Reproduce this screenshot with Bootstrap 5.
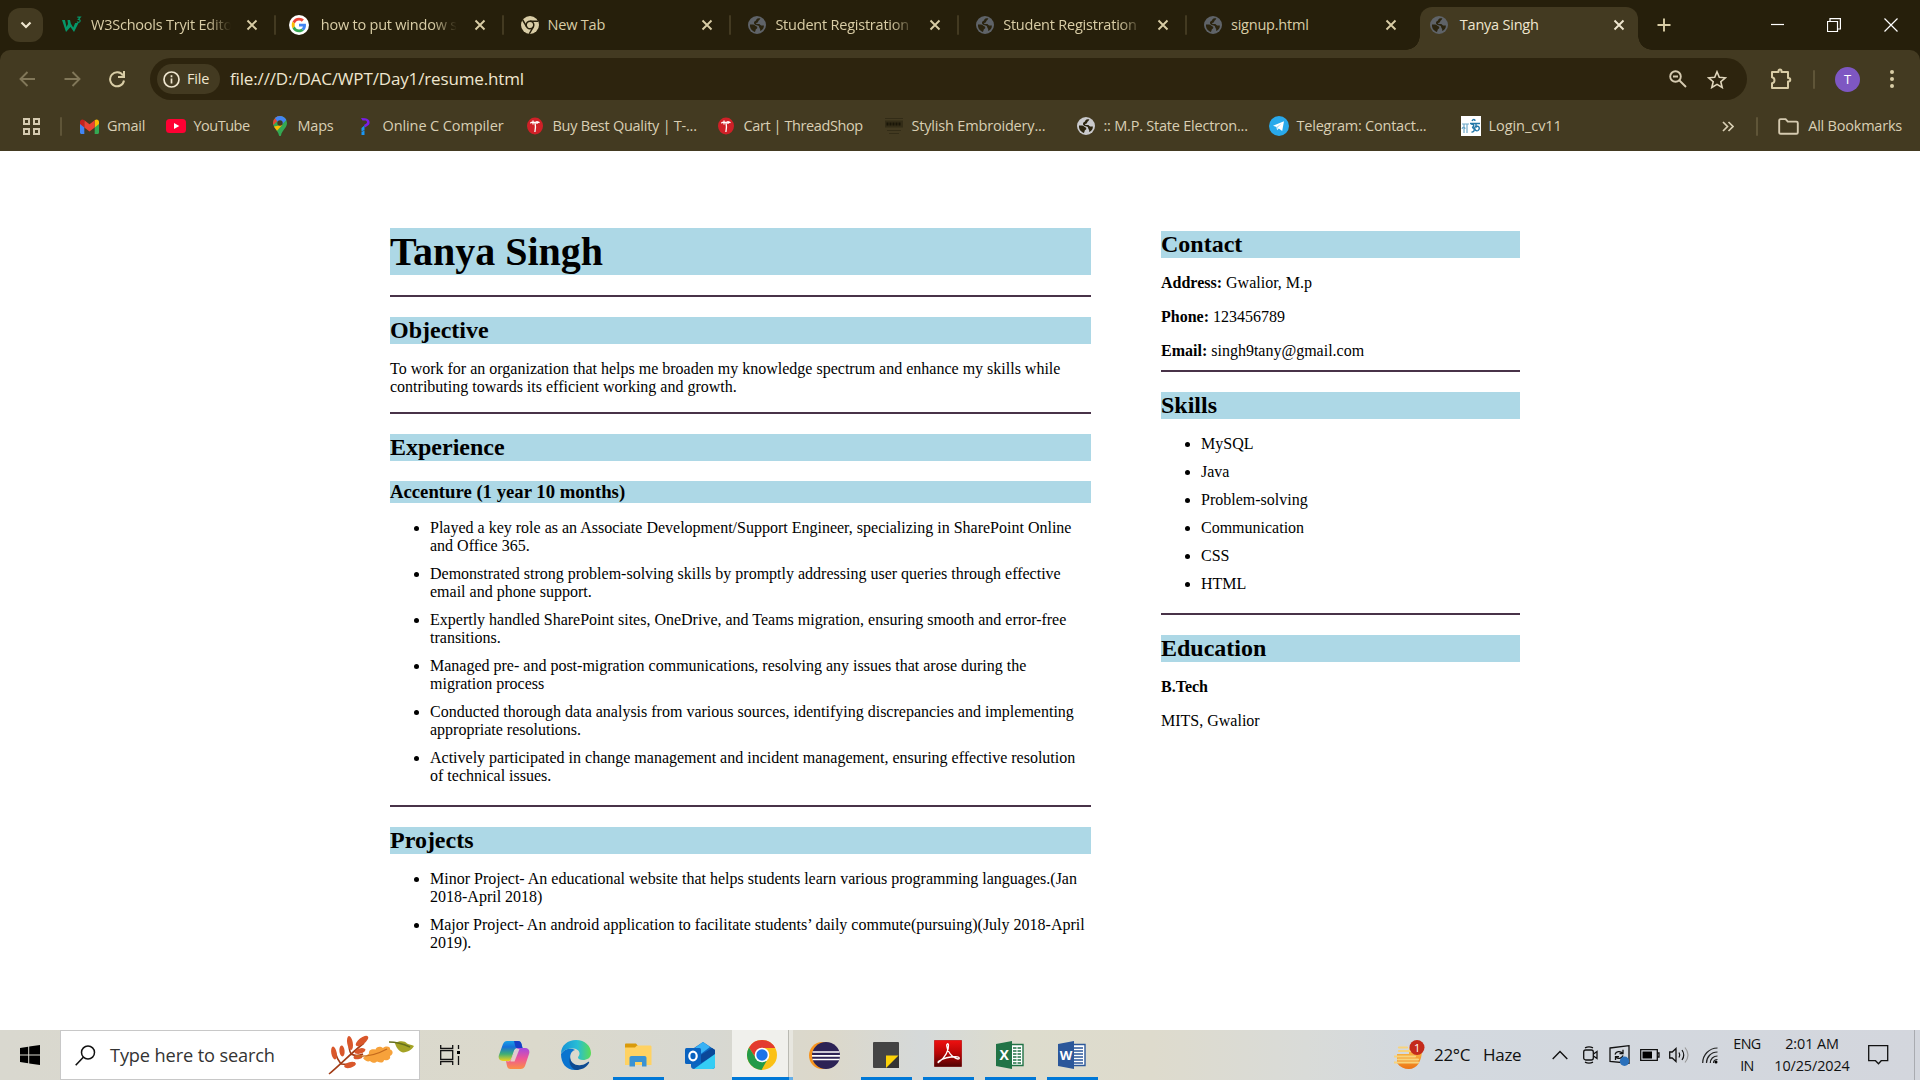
<!DOCTYPE html>
<html lang="en">
<head>
<meta charset="utf-8">
<title>Tanya Singh</title>
<link href="https://cdn.jsdelivr.net/npm/bootstrap@5.3.0/dist/css/bootstrap.min.css" rel="stylesheet">
<style>
  html, body { height: 1080px; overflow: hidden; }
  body { background: #fff; color: #000; font-family: "Open Sans", "Noto Sans", sans-serif; font-size: 14.5px; letter-spacing: -.22px; line-height: 20px; }
  svg { display: block; flex: none; }

  /* browser frame */
  .tab-strip { height: 50px; background: #261f0b; color: #d9cda6; padding: 7px 0 0 8px; }
  .tab-search { width: 35px; height: 34px; margin-top: 1px; border-radius: 12px; background: #433a21; flex: none; }
  .tab-list { margin-left: 5px; }
  .page-tab { width: 227.8px; height: 36px; padding: 0 18px 0 13px; position: relative; flex: none; }
  .page-tab.divided::after { content: ""; position: absolute; right: 0; top: 8px; width: 2px; height: 20px; background: #433a21; border-radius: 1px; }
  .tab-label { width: 140px; margin-left: 9px; overflow: hidden; white-space: nowrap; }
  .tab-label.faded { -webkit-mask-image: linear-gradient(90deg, #000 116px, transparent 140px); mask-image: linear-gradient(90deg, #000 116px, transparent 140px); }
  .tab-label + svg { margin-left: auto; }
  .current-tab { width: 218px; height: 43px; margin-left: 5px; background: #433a21; color: #efe6cf; border-radius: 12px 12px 0 0; padding: 0 13px 7px 10px; }
  .current-tab::before, .current-tab::after { content: ""; position: absolute; bottom: 0; width: 14px; height: 14px; }
  .current-tab::before { left: -14px; background: radial-gradient(circle at 0 0, transparent 13.5px, #433a21 14px); }
  .current-tab::after { right: -14px; background: radial-gradient(circle at 100% 0, transparent 13.5px, #433a21 14px); }
  .new-tab-key { margin: 11px 0 0 19px; }
  .window-keys { gap: 43px; padding: 0 22px 8px 0; }
  .toolbar-area { background: #261f0b; }
  .toolbar-row { height: 58px; background: #433a21; border-radius: 10px 10px 0 0; padding: 0 17px 0 18px; }
  .nav-keys { gap: 25px; width: 132px; }
  .nav-keys svg:last-child { margin-left: 1px; }
  .address { width: 1597px; height: 42px; border-radius: 21px; background: #2d240e; color: #efe6cf; padding: 0 20px 0 7px; }
  .file-chip { width: 63px; height: 30px; border-radius: 15px; background: #433a21; padding-left: 6px; gap: 7px; }
  .url-text { font-size: 17px; letter-spacing: -.15px; margin-left: 10px; }
  .address-keys { gap: 20px; }
  .avatar { width: 25px; height: 25px; background: #7e57c2; color: #fff; font-size: 13px; letter-spacing: 0; }
  .bookmark-row { height: 43px; background: #433a21; color: #d9cfb4; padding: 0 18px 7px 22px; }
  .thin-rule { width: 2px; height: 19px; background: #5f5538; border-radius: 1px; flex: none; }
  .bm { display: flex; align-items: center; gap: 7.5px; white-space: nowrap; flex: none; }
  .bm-gmail { width: 86.5px; } .bm-youtube { width: 104px; letter-spacing: -.5px; } .bm-maps { width: 85px; }
  .bm-compiler { width: 170px; letter-spacing: -.1px; } .bm-quality { width: 191px; letter-spacing: -.25px; } .bm-cart { width: 168px; letter-spacing: -.4px; }
  .bm-stylish { width: 192px; letter-spacing: -.18px; } .bm-state { width: 193px; } .bm-telegram { width: 192px; } .bm-login { width: 120px; letter-spacing: -.05px; }
  .bm-icon { width: 20px; display: flex; justify-content: center; flex: none; }

  /* resume */
  .resume { height: 879px; padding: 77px 400px 0 390px; font-family: "Liberation Serif", serif; font-size: 16px; line-height: 18px; letter-spacing: 0; }
  .resume h1, .resume h2, .resume h3 { background: lightblue; font-weight: 700; margin: 0; }
  .resume h1 { font-size: 40px; line-height: 47px; }
  .resume h2 { font-size: 24px; line-height: 27px; margin-top: 20px; }
  .resume h3 { font-size: 18.72px; line-height: 22px; margin: 20px 0 16px; }
  .resume p { margin: 16px 0; }
  .resume ul { padding-left: 40px; margin: 16px 0 0; }
  .resume li { margin-bottom: 10px; }
  .resume li:last-child { margin-bottom: 0; }
  .resume hr { margin: 0; border: 0; height: 2px; background: #483248; opacity: 1; }
  .resume ul + hr, .resume h1 + hr { margin-top: 20px; }
  .resume p.email-line { margin-bottom: 10px; }
  .main-col { width: 701px; flex: none; }
  .side-col { width: 359px; margin-left: 70px; padding-top: 3px; flex: none; }
  .side-col h2:first-child { margin-top: 0; }

  /* taskbar */
  .taskbar { height: 50px; background: linear-gradient(90deg, #d9d8cf 0, #dbd9cc 28%, #d7d8d2 37%, #dcd8ca 43%, #d5d9d9 48%, #dddccd 53%, #dedbcd 60%, #d9dbd8 68%, #d3d9df 74%, #d3d6dd 100%); color: #111; }
  .start-key { width: 60px; }
  .search-field { width: 360px; height: 50px; background: #fff; border: 1px solid #c8c8c8; padding: 0 2px 0 14px; font-size: 18.2px; color: #333; letter-spacing: -.13px; }
  .view-key { width: 63px; padding-right: 3px; }
  .task-key { width: 62px; height: 50px; display: flex; align-items: center; justify-content: center; position: relative; flex: none; }
  .task-key.is-open::after { content: ""; position: absolute; left: 6px; right: 5px; bottom: 0; height: 3px; background: #0078d7; }
  .task-key.is-active { background: linear-gradient(90deg, transparent 1px, #f0f0ec 1px 57px, #b9b9b2 57px 58px, #e7e6df 58px); }
  .task-key.is-active::after { left: 1px; right: 0; background: linear-gradient(90deg, #0078d7 57px, #64aee8 57px); }
  .weather-text { width: 118px; margin-left: 9px; font-size: 17px; letter-spacing: -.3px; }
  .weather-text span:first-child { width: 49px; }
  .lang-box { width: 40px; margin-left: 9px; line-height: 22.5px; letter-spacing: -.6px; font-size: 14.3px; }
  .clock-box { width: 90px; line-height: 22.5px; letter-spacing: -.1px; font-size: 14.4px; }
  .desktop-edge { width: 1px; height: 50px; margin: 0 5px 0 25px; background: #a9abb0; }
</style>
<script src="https://cdn.jsdelivr.net/npm/bootstrap@5.3.0/dist/js/bootstrap.bundle.min.js"></script>
</head>
<body>

<svg width="0" height="0" class="position-absolute">
  <defs>
    <symbol id="cross" viewBox="0 0 12 12"><path d="M1.500 1.500l9 9M10.500 1.500l-9 9" stroke="currentColor" stroke-width="1.900"/></symbol>
    <symbol id="globe" viewBox="0 0 18 18"><circle cx="9" cy="9" r="9" fill="currentColor"/><path d="M2 8.500h3c1.800 0 2 1.300 3.200 1.700 1.500.5 1.500 2.300 0 2.800-.9.300-.3 1.800-1.300 2.900C3.800 15 1.600 12 2 8.500zM8.500 3.200c.8-1 2.400-1.200 3.900-.6-.5.700-.7 1.500-1.600 1.900-.9.500-.3 1.700-1.300 2-1 .3-1.400.5-1.300 1.400l3 .2c.9.100.9 1.200 1.900 1.300h2.800c.1 2.700-1.500 4.900-3.900 5.600.4-1 .3-1.900-.4-2.700-.5-.9-.3-1.800-1.200-2.500-.8-.6-2.500-.6-3.600-1.300-1-.8-1.100-2.200-.3-3 .6-.7 1.900-.9 2-2.300z" fill="#2b240f"/></symbol>
    <symbol id="threadshop" viewBox="0 0 16 20"><ellipse cx="8" cy="10" rx="8" ry="8.500" fill="#cf2027"/><path d="M3.300 7.200C5.500 5.200 7 6.700 8 6.500c1.500-.3 2.500-1.300 4.500.2M8 6.500c.8 3 .5 6-.1 9.500M6 4.500v4M10 5v3" stroke="#fff" stroke-width="1.300" fill="none"/></symbol>
  </defs>
</svg>

<header>
  <div class="tab-strip d-flex">
    <div class="tab-search d-flex align-items-center justify-content-center">
      <svg width="12" height="8" viewBox="0 0 12 8"><path d="M1.500 1.500L6 6l4.500-4.500" fill="none" stroke="#efe6cf" stroke-width="2.200"/></svg>
    </div>
    <div class="tab-list d-flex">
      <div class="page-tab divided d-flex align-items-center">
        <svg width="21" height="18" viewBox="0 0 21 18"><path d="M1 4l4 12 4.500-5 3.500 5L17.500 7h-3.300l-2 4.500L9.800 7.500 9 4H6.500L7 8l-1.500 3L4 4z" fill="#059669"/><path d="M16.300 1.200h3L17.500 3.300c2 0 2.400 2.600.2 3-.9.100-1.300-.2-1.700-.7" fill="none" stroke="#059669" stroke-width="1.200"/></svg>
        <span class="tab-label faded">W3Schools Tryit Edito</span>
        <svg width="12" height="12"><use href="#cross"/></svg>
      </div>
      <div class="page-tab divided d-flex align-items-center">
        <svg width="20" height="20" viewBox="0 0 48 48"><circle cx="24" cy="24" r="24" fill="#fff"/><g transform="translate(6.500 6.500) scale(.73)"><path fill="#ea4335" d="M24 9.500c3.540 0 6.710 1.220 9.210 3.600l6.850-6.850C35.900 2.380 30.470 0 24 0 14.620 0 6.510 5.380 2.560 13.220l7.980 6.190C12.430 13.720 17.740 9.500 24 9.500z"/><path fill="#4285f4" d="M46.980 24.550c0-1.570-.15-3.090-.38-4.550H24v9.020h12.940c-.58 2.960-2.260 5.480-4.780 7.180l7.730 6c4.510-4.180 7.090-10.360 7.090-17.650z"/><path fill="#fbbc05" d="M10.530 28.590c-.48-1.450-.76-2.990-.76-4.590s.27-3.140.76-4.590l-7.980-6.190C.92 16.460 0 20.120 0 24s.92 7.540 2.560 10.780l7.970-6.190z"/><path fill="#34a853" d="M24 48c6.480 0 11.930-2.130 15.890-5.810l-7.730-6c-2.150 1.450-4.920 2.300-8.160 2.300-6.260 0-11.570-4.220-13.470-9.910l-7.980 6.190C6.510 42.620 14.620 48 24 48z"/></g></svg>
        <span class="tab-label faded ms-2 ps-1">how to put window si</span>
        <svg width="12" height="12"><use href="#cross"/></svg>
      </div>
      <div class="page-tab divided d-flex align-items-center">
        <svg width="18" height="18" viewBox="0 0 18 18" class="ms-1 me-0"><circle cx="9" cy="9" r="9" fill="#d9cda6"/><circle cx="9" cy="9" r="3.800" fill="none" stroke="#261f0b" stroke-width="1.500"/><path d="M9 5.200h8M12.300 10.900l-4 6.900M5.700 10.900l-4-6.900" stroke="#261f0b" stroke-width="1.500"/></svg>
        <span class="tab-label">New Tab</span>
        <svg width="12" height="12"><use href="#cross"/></svg>
      </div>
      <div class="page-tab divided d-flex align-items-center">
        <svg width="18" height="18" class="ms-1" color="#5f6368"><use href="#globe"/></svg>
        <span class="tab-label faded">Student Registration</span>
        <svg width="12" height="12"><use href="#cross"/></svg>
      </div>
      <div class="page-tab divided d-flex align-items-center">
        <svg width="18" height="18" class="ms-1" color="#5f6368"><use href="#globe"/></svg>
        <span class="tab-label faded">Student Registration</span>
        <svg width="12" height="12"><use href="#cross"/></svg>
      </div>
      <div class="page-tab d-flex align-items-center">
        <svg width="18" height="18" class="ms-1" color="#5f6368"><use href="#globe"/></svg>
        <span class="tab-label">signup.html</span>
        <svg width="12" height="12"><use href="#cross"/></svg>
      </div>
      <div class="page-tab current-tab d-flex align-items-center">
        <svg width="18" height="18" color="#5f6368"><use href="#globe"/></svg>
        <span class="tab-label ms-2 ps-1">Tanya Singh</span>
        <svg width="12" height="12"><use href="#cross"/></svg>
      </div>
      <svg width="14" height="14" viewBox="0 0 14 14" class="new-tab-key"><path d="M7 .5v13M.5 7h13" stroke="#d9cda6" stroke-width="1.900"/></svg>
    </div>
    <div class="window-keys d-flex align-items-center ms-auto">
      <svg width="13" height="13"><path d="M0 6.500h13" stroke="#fff" stroke-width="1.200"/></svg>
      <svg width="14" height="14" viewBox="0 0 14 14"><path d="M.5 3.500h10v10H.5zM3 3V.6h10.400V11H11" fill="none" stroke="#fff" stroke-width="1.200"/></svg>
      <svg width="14" height="14" viewBox="0 0 14 14"><path d="M.5.500l13 13M13.500.500l-13 13" stroke="#fff" stroke-width="1.200"/></svg>
    </div>
  </div>

  <div class="toolbar-area">
    <div class="toolbar-row d-flex align-items-center">
      <div class="nav-keys d-flex align-items-center">
        <svg width="19" height="18" viewBox="0 0 19 18"><path d="M17 9H3M9.500 2L2.500 9l7 7" fill="none" stroke="#817759" stroke-width="1.900"/></svg>
        <svg width="19" height="18" viewBox="0 0 19 18"><path d="M2.500 9H17M10.500 2l7 7-7 7" fill="none" stroke="#817759" stroke-width="1.900"/></svg>
        <svg width="20" height="18" viewBox="0 0 20 18"><path d="M16 5.500A7 7 0 1 0 17 10.500" fill="none" stroke="#d9cda6" stroke-width="2"/><path d="M17 1v6h-6" fill="none" stroke="#d9cda6" stroke-width="2"/></svg>
      </div>
      <div class="address d-flex align-items-center">
        <div class="file-chip d-flex align-items-center">
          <svg width="17" height="17" viewBox="0 0 17 17"><circle cx="8.500" cy="8.500" r="7.500" fill="none" stroke="#efe6cf" stroke-width="1.700"/><path d="M8.500 7.500v5M8.500 4.300v1.900" stroke="#efe6cf" stroke-width="1.700"/></svg>
          <span>File</span>
        </div>
        <span class="url-text">file:///D:/DAC/WPT/Day1/resume.html</span>
        <div class="address-keys d-flex align-items-center ms-auto">
          <svg width="18" height="18" viewBox="0 0 18 18"><circle cx="6.500" cy="6.500" r="5.300" fill="none" stroke="#d5cab0" stroke-width="1.900"/><path d="M10.500 10.500l6.500 6.500M4 6.500h5" stroke="#d5cab0" stroke-width="1.900"/></svg>
          <svg width="20" height="19" viewBox="0 0 20 19"><path d="M10 1.800l2.300 5.500 6 .5-4.500 3.900 1.400 5.800-5.200-3.100-5.200 3.100 1.400-5.800L1.700 7.800l6-.5z" fill="none" stroke="#e0d6bc" stroke-width="1.600"/></svg>
        </div>
      </div>
      <svg width="22" height="22" viewBox="0 0 22 22" style="margin-left:23px"><path d="M2 4h6.500V3a1.500 1.500 0 0 1 3 0v1H18v6h.5a1.500 1.500 0 0 1 0 3.500H18V20H2v-4.700c3.300-.5 3.300-5.600 0-6.100z" fill="none" stroke="#d9cda6" stroke-width="2" stroke-linejoin="round"/></svg>
      <span class="thin-rule" style="margin-left:21px"></span>
      <span class="avatar rounded-circle d-flex align-items-center justify-content-center" style="margin-left:20px">T</span>
      <svg width="6" height="20" viewBox="0 0 6 20" class="ms-auto me-2"><g fill="#d9cda6"><circle cx="3" cy="3" r="2"/><circle cx="3" cy="10" r="2"/><circle cx="3" cy="17" r="2"/></g></svg>
    </div>
  </div>

  <nav class="bookmark-row d-flex align-items-center">
    <svg width="19" height="19" viewBox="0 0 19 19"><path d="M2 2h5v5H2zM12 2h5v5h-5zM2 12h5v5H2zM12 12h5v5h-5z" fill="none" stroke="#d5cab0" stroke-width="2"/></svg>
    <span class="thin-rule" style="margin:0 17.500px 0 19px"></span>
    <span class="bm bm-gmail"><span class="bm-icon"><svg width="19" height="15" viewBox="0 0 19 15"><path d="M0 3h4.300v12H1.500C.7 15 0 14.300 0 13.500z" fill="#4285f4"/><path d="M14.700 3H19v10.500c0 .8-.7 1.500-1.500 1.500h-2.800z" fill="#34a853"/><path d="M14.700 1.200C16.500-.4 19 .5 19 2.800V5l-4.300 3.500z" fill="#fbbc04"/><path d="M4.300 1.200l5.200 4 5.200-4v7.300l-5.200 4-5.200-4z" fill="#ea4335"/><path d="M0 2.800C0 .5 2.500-.4 4.300 1.200v7.300L0 5z" fill="#c5221f"/></svg></span>Gmail</span>
    <span class="bm bm-youtube"><span class="bm-icon"><svg width="20" height="14" viewBox="0 0 20 14"><rect width="20" height="14" rx="3.500" fill="#ff0033"/><path d="M8 4l5.300 3L8 10z" fill="#fff"/></svg></span>YouTube</span>
    <span class="bm bm-maps"><span class="bm-icon"><svg width="14" height="20" viewBox="0 0 14 20"><path d="M7 0a7 7 0 0 1 7 7c0 5-5 7-6 12.400-.2.800-1.800.8-2 0C5.300 15 0 11.500 0 7a7 7 0 0 1 7-7z" fill="#34a853"/><path d="M.3 9L9 0.300A7 7 0 0 0 0 7z" fill="#ea4335"/><path d="M7 0c2.500 0 5 1.300 6.300 4L7.500 10 2 2.300C3.500.8 5 0 7 0z" fill="#4285f4"/><path d="M1 10.500L9.500 8.700 4 14.700C2.800 13.200 1.600 12 1 10.500z" fill="#fbbc04"/><circle cx="7" cy="7" r="2.700" fill="#433a21"/></svg></span>Maps</span>
    <span class="bm bm-compiler"><span class="bm-icon"><svg width="11" height="18" viewBox="0 0 11 18"><path d="M1 1l4 .3c3 .4 4.800 2 4.600 4.500C9.400 8.500 7 9 5 10.500L4 8c1.500-1 3-1.500 3-3S4.500 3.500 2.500 3.500z" fill="#7a1de8"/><path d="M1.500 11l3-2.500V13l-3 1.500zM1.500 15l3-1.500V18h-3z" fill="#1a96f5"/></svg></span>Online C Compiler</span>
    <span class="bm bm-quality"><span class="bm-icon"><svg width="16" height="20"><use href="#threadshop"/></svg></span>Buy Best Quality | T-...</span>
    <span class="bm bm-cart"><span class="bm-icon"><svg width="16" height="20"><use href="#threadshop"/></svg></span>Cart | ThreadShop</span>
    <span class="bm bm-stylish"><span class="bm-icon"><svg width="20" height="18" viewBox="0 0 20 18"><path d="M1 1.500h18M3 13.500h14M5 16.500h10" stroke="#332c17" stroke-width="1.200" fill="none"/><path d="M1 3.500h18v7H1z" fill="#332c17"/><path d="M2.500 7h15" stroke="#191507" stroke-width="3" stroke-dasharray="2 1"/></svg></span>Stylish Embroidery...</span>
    <span class="bm bm-state"><span class="bm-icon"><svg width="18" height="18" color="#c9c9cc"><use href="#globe"/></svg></span>:: M.P. State Electron...</span>
    <span class="bm bm-telegram"><span class="bm-icon"><svg width="20" height="20" viewBox="0 0 20 20"><circle cx="10" cy="10" r="10" fill="#29a9eb"/><path d="M4 9.700l11-4.500-1.800 9.800-3.400-2.500-1.700 1.700-.6-3.100z" fill="#fff"/><path d="M7.500 11l5-3.600-3.800 4.200-.6 2.600z" fill="#9ed5f2"/></svg></span>Telegram: Contact...</span>
    <span class="bm bm-login"><span class="bm-icon"><svg width="20" height="20" viewBox="0 0 20 20"><path fill="#fff" d="M0 0h20v20H0z"/><path d="M1 8h7M3 8v9M1 13c1-3 3-2 3 0M6 8v9" fill="none" stroke="#6fa9c9" stroke-width="1.200"/><path d="M9 7.500h10M10 8c4 0 3 3 1 3.500 3 0 3 5-.5 4.500M15 8v2c-3 2 0 6 2 4.500 3-3-.5-6-2-3M11 5c1-2 3-2 3 0" fill="none" stroke="#2377a8" stroke-width="1.400"/></svg></span>Login_cv11</span>
    <svg width="12" height="11" viewBox="0 0 12 11" class="ms-auto"><path d="M1 1l4.500 4.500L1 10M6.500 1L11 5.500 6.500 10" fill="none" stroke="#d9cfb4" stroke-width="1.700"/></svg>
    <span class="thin-rule" style="margin:0 20px 0 22px"></span>
    <svg width="21" height="17" viewBox="0 0 21 17"><path d="M1.200 2.500c0-.9.500-1.400 1.400-1.400h5l2.200 2.500h8.600c.9 0 1.400.5 1.400 1.400v9.400c0 .9-.5 1.400-1.400 1.400H2.600c-.9 0-1.400-.5-1.400-1.400z" fill="none" stroke="#d5cab0" stroke-width="1.900"/></svg>
    <span class="text-nowrap" style="margin-left:9px">All Bookmarks</span>
  </nav>
</header>

<main class="resume d-flex">
  <section class="main-col">
    <h1>Tanya Singh</h1>
    <hr>
    <h2>Objective</h2>
    <p>To work for an organization that helps me broaden my knowledge spectrum and enhance my skills while contributing towards its efficient working and growth.</p>
    <hr>
    <h2>Experience</h2>
    <h3>Accenture (1 year 10 months)</h3>
    <ul>
      <li>Played a key role as an Associate Development/Support Engineer, specializing in SharePoint Online and Office 365.</li>
      <li>Demonstrated strong problem-solving skills by promptly addressing user queries through effective email and phone support.</li>
      <li>Expertly handled SharePoint sites, OneDrive, and Teams migration, ensuring smooth and error-free transitions.</li>
      <li>Managed pre- and post-migration communications, resolving any issues that arose during the migration process</li>
      <li>Conducted thorough data analysis from various sources, identifying discrepancies and implementing appropriate resolutions.</li>
      <li>Actively participated in change management and incident management, ensuring effective resolution of technical issues.</li>
    </ul>
    <hr>
    <h2>Projects</h2>
    <ul>
      <li>Minor Project- An educational website that helps students learn various programming languages.(Jan 2018-April 2018)</li>
      <li>Major Project- An android application to facilitate students’ daily commute(pursuing)(July 2018-April 2019).</li>
    </ul>
  </section>
  <section class="side-col">
    <h2>Contact</h2>
    <p><b>Address:</b> Gwalior, M.p</p>
    <p><b>Phone:</b> 123456789</p>
    <p class="email-line"><b>Email:</b> singh9tany@gmail.com</p>
    <hr>
    <h2>Skills</h2>
    <ul>
      <li>MySQL</li>
      <li>Java</li>
      <li>Problem-solving</li>
      <li>Communication</li>
      <li>CSS</li>
      <li>HTML</li>
    </ul>
    <hr>
    <h2>Education</h2>
    <p><b>B.Tech</b></p>
    <p>MITS, Gwalior</p>
  </section>
</main>

<footer class="taskbar d-flex align-items-center">
  <div class="start-key d-flex justify-content-center">
    <svg width="20" height="20" viewBox="0 0 20 20"><path d="M0 2.900L8.200 1.700v7.800H0zM9.200 1.500L20 0v9.500H9.200zM0 10.500h8.200v7.800L0 17.100zM9.200 10.500H20V20L9.200 18.500z"/></svg>
  </div>
  <div class="search-field d-flex align-items-center">
    <svg width="21" height="21" viewBox="0 0 21 21"><circle cx="13" cy="7.500" r="6.500" fill="none" stroke="#111" stroke-width="1.500"/><path d="M8.300 12.300L.7 20.200" stroke="#111" stroke-width="1.600"/></svg>
    <span style="margin-left:14px">Type here to search</span>
    <svg width="90" height="42" viewBox="0 0 90 42" class="ms-auto">
      <path d="M2 40C12 32 23 20 37 9M14 30q-4-5-6-12M24 20q-3-6-1-13M14 30q9 1 14-1M24 20q6 3 12 0" fill="none" stroke="#a23c16" stroke-width="1.600"/>
      <g fill="#d9572b"><ellipse cx="7" cy="19" rx="2.700" ry="6.500" transform="rotate(-10 7 19)"/><ellipse cx="15" cy="17" rx="2.600" ry="5.500" transform="rotate(-5 15 17)"/><ellipse cx="23" cy="9" rx="2.800" ry="7" transform="rotate(-10 23 9)"/><ellipse cx="35" cy="7" rx="3.300" ry="7.500" transform="rotate(52 35 7)"/><ellipse cx="33" cy="17" rx="2.700" ry="5.500" transform="rotate(75 33 17)"/><ellipse cx="31" cy="23" rx="2.300" ry="4.500" transform="rotate(85 31 23)"/><ellipse cx="23" cy="31" rx="2.800" ry="6" transform="rotate(75 23 31)"/></g>
      <path d="M36 24c2 3 5 4 7 3 2 2 5 2.500 7 .5 4 2 7 1 7-1.500 4 1 7-1 6-4 4-2 3-6 0-6.500 1-3-4-4-7-1.500-3-2.500-7-1-7.500 1.500-4-1-7 .5-6.500 4z" fill="#f7a23b"/><path d="M29 22c10 1 20-1 31-7" fill="none" stroke="#c46a1d" stroke-width="1.300"/>
      <path d="M68 9c4-2.500 10-2.500 12 .5 2 1 5 1.500 7 2.500-2 3.500-6 6-11 6.500-4-1-7-5-8-9.500z" fill="#a4a326"/><path d="M62 8c8 0 12 1 21 5" fill="none" stroke="#66711d" stroke-width="1.400"/>
    </svg>
  </div>
  <div class="view-key d-flex justify-content-center">
    <svg width="20" height="20" viewBox="0 0 20 20"><path d="M.7 0v3.400h12V0M.7 20v-3.400h12V20M.7 5.500h12v9H.7zM18.500 0v4M18.500 11v9" fill="none" stroke="#111" stroke-width="1.300"/><path d="M17 6h3v3h-3z"/></svg>
  </div>
  <div class="task-key">
    <svg width="32" height="28" viewBox="0 0 32 28">
      <defs><linearGradient id="cpA" x2="0" y2="1"><stop stop-color="#18a0e8"/><stop offset=".3" stop-color="#1670d8"/><stop offset=".65" stop-color="#3fae76"/><stop offset="1" stop-color="#f0d31b"/></linearGradient><linearGradient id="cpB" x2="0" y2="1"><stop stop-color="#a548e0"/><stop offset=".5" stop-color="#ee5597"/><stop offset="1" stop-color="#fb8f45"/></linearGradient></defs>
      <path d="M9 0h11c2 0 3 1 3.500 3l1 4h-5c-2 0-3 1-4 4l-2 6c-1 3-2 3-4 3H5c-4 0-5-3-4-6L5 3c1-2 2-3 4-3z" fill="url(#cpA)"/><path d="M16 0h4c2 0 3 1 3.500 3l1 4h-5c-2 0-2-1-3-5z" fill="#183ec5"/>
      <path d="M22.500 28h-10c-2 0-3-1-3.500-3L8 20c3 1 5 0 6-3l3-7c1-2 2-3 4-3h6c4 0 5 3 4 6l-4 12c-1 2-2 3-4.500 3z" fill="url(#cpB)"/>
      <path d="M17.500 8h4l-5 12.500h-4z" fill="#e4e0d2" opacity=".85"/>
    </svg>
  </div>
  <div class="task-key">
    <svg width="30" height="30" viewBox="0 0 30 30">
      <defs><linearGradient id="edA"><stop stop-color="#1593d8"/><stop offset=".55" stop-color="#28bdd5"/><stop offset="1" stop-color="#5bdc55"/></linearGradient></defs>
      <path d="M0 14C0 5 7 0 15 0c9 0 15 6 15 13 0 5-4 7-8 7-3 0-5-1-5-2.500 0-1 1.500-1.500 1.500-4 0-3-3-5-7-5C7 8.500 2 10 0 14z" fill="url(#edA)"/>
      <path d="M0 14c3-5 10-6.500 14-4-4 1-6 6-4 11 2 4 7 6 11 5-2 3-4 4-7 4C5 30 0 23 0 14z" fill="#0b74cf"/>
      <path d="M9 17c0 6 6 9 11 8 3 0 5-2 7-3 1-.5 1.500.5 1 1-3 5-8 7-13 7-4-1-8-6-6-13z" fill="#0e4b92"/>
    </svg>
  </div>
  <div class="task-key is-open">
    <svg width="28" height="24" viewBox="0 0 28 24"><path d="M1 1.500C1 1 1.500.5 2 .5h10l2 2.500v3H1z" fill="#d99a0b"/><path d="M1 4.500h10l2-2h13c1 0 1.500.5 1.500 1.500v18H1z" fill="#ffd262"/><path d="M5.500 23.500V15c0-1.300.8-2 2-2h13c1.200 0 2 .7 2 2v8.500H18V19h-7v4.500z" fill="#3b93d3"/></svg>
  </div>
  <div class="task-key">
    <svg width="30" height="27" viewBox="0 0 30 27"><path d="M6 8L18 0l12 8v16c0 2-1 3-3 3H9c-2 0-3-1-3-3z" fill="#0d66be"/><path d="M7 8l11-8 7 5-12 9z" fill="#38b2f5"/><path d="M14 14L27 6l3 2v5l-14 8z" fill="#0b4898"/><path d="M30 12v12c0 2-1 3-3 3H9z" fill="#35cdf5"/><rect y="6" width="16" height="16" rx="1.500" fill="#0a63c0"/><ellipse cx="8" cy="14" rx="3.700" ry="4.300" fill="none" stroke="#fff" stroke-width="2.200"/></svg>
  </div>
  <div class="task-key is-open is-active">
    <svg width="30" height="30" viewBox="0 0 30 30"><circle cx="15" cy="15" r="15" fill="#fbc116"/><path d="M15 8H28.200A15 15 0 0 0 2 7.500l7 11z" fill="#e33b2e"/><path d="M2 7.500A15 15 0 0 0 14.500 30l6.500-11.500-6 3.500-6-3.500z" fill="#249b48"/><circle cx="15" cy="15" r="7.300" fill="#fff"/><circle cx="15" cy="15" r="5.700" fill="#1b74e8"/></svg>
  </div>
  <div class="task-key">
    <svg width="31" height="27" viewBox="0 0 31 27"><ellipse cx="13" cy="13.500" rx="13" ry="13.500" fill="#f7941e"/><ellipse cx="17" cy="13.500" rx="14" ry="13.500" fill="#2c2255"/><path d="M3.500 10h27M3 13.800h28M3.500 17.500h27" stroke="#fff" stroke-width="1.700"/></svg>
  </div>
  <div class="task-key is-open">
    <svg width="26" height="26" viewBox="0 0 26 26"><rect width="26" height="26" rx="1" fill="#444"/><path d="M13 26L26 13v13z" fill="#333"/><path d="M13 13.500h12.500L13 26z" fill="#fcd208"/></svg>
  </div>
  <div class="task-key is-open">
    <svg width="28" height="27" viewBox="0 0 28 27" class="mb-1"><defs><linearGradient id="acA" x2="0" y2="1"><stop stop-color="#f01010"/><stop offset=".5" stop-color="#b80606"/><stop offset="1" stop-color="#4d0202"/></linearGradient></defs><rect width="28" height="27" rx="1" fill="url(#acA)" stroke="#a64a4a" stroke-width=".8"/><path d="M5 22c6-4 10-12 9.500-17-.3-2-2-1.500-1.800.7C13 11 18 18 24 19c2 0 1.500-2-.5-2.200C17 16.500 10 18 5 21c-1.500 1-1 2.500 0 1z" fill="none" stroke="#fff" stroke-width="1.300"/></svg>
  </div>
  <div class="task-key is-open">
    <svg width="28" height="28" viewBox="0 0 28 28"><path d="M14 3.500h13v21H14z" fill="#fff" stroke="#217346" stroke-width="1.400"/><path d="M17 7h8M17 10h8M17 13h8M17 16h8M17 19h8M17 22h8" stroke="#217346" stroke-width="1.700"/><path d="M21 5v18" stroke="#fff"/><path d="M0 3l16-3v28L0 25z" fill="#217346"/><text x="8" y="19" text-anchor="middle" font-family="Open Sans" font-weight="700" font-size="14" fill="#fff">X</text></svg>
  </div>
  <div class="task-key is-open">
    <svg width="28" height="28" viewBox="0 0 28 28"><path d="M14 3.500h13v21H14z" fill="#fff" stroke="#2b579a" stroke-width="1.400"/><path d="M16 7h9M16 10h9M16 13h9M16 16h9M16 19h9M16 22h9" stroke="#2b579a" stroke-width="1.500"/><path d="M0 3l16-3v28L0 25z" fill="#2b579a"/><text x="8" y="19" text-anchor="middle" font-family="Open Sans" font-weight="700" font-size="13" fill="#fff">W</text></svg>
  </div>

  <div class="d-flex align-items-center ms-auto">
    <svg width="31" height="30" viewBox="0 0 31 30"><defs><linearGradient id="szA" x2="0" y2="1"><stop stop-color="#fbc54e"/><stop offset="1" stop-color="#ed7415"/></linearGradient></defs><path d="M28 10c0 11-5 19-13 19-5 0-9-2-12-6v-9h12V8z" fill="url(#szA)"/><path d="M5 7.500h8M5 11h12M0 16.500h21M4 19.500h20M0 22.500h24" stroke="#f8d47c" stroke-width="2.200" stroke-linecap="round"/><circle cx="23" cy="7.500" r="7.500" fill="#c42b1c"/><text x="23" y="11.500" text-anchor="middle" font-family="Open Sans" font-size="11" fill="#fff">1</text></svg>
    <span class="weather-text d-flex"><span>22°C</span><span>Haze</span></span>
    <svg width="16" height="10" viewBox="0 0 16 10"><path d="M.7 9L8 1.500 15.300 9" fill="none" stroke="#111" stroke-width="1.400"/></svg>
    <svg width="15" height="18" viewBox="0 0 15 18" style="margin-left:15px"><rect x=".7" y="4" width="9.600" height="10" rx="2" fill="none" stroke="#111" stroke-width="1.300"/><path d="M10.500 8L14 5.500v7L10.500 10M2 1.800Q6 0 10 1.800M2 16.200q4 1.800 8 0" fill="none" stroke="#111" stroke-width="1.300"/></svg>
    <svg width="21" height="21" viewBox="0 0 21 21" style="margin-left:11px"><path d="M1 3l19-2.300v17.500L1 16.500z" fill="none" stroke="#111" stroke-width="1.300"/><path d="M6 9.500c1-3 5-4 7.500-1.500M14 4.800V8.500h-3.500M14 10.500c-1 3-5 4-7 1.500M6.500 15v-3.300H10" fill="none" stroke="#111" stroke-width="1.300"/><circle cx="15.500" cy="16.300" r="4.700" fill="#2a70bb"/></svg>
    <svg width="20" height="12" viewBox="0 0 20 12" style="margin-left:10px"><path d="M.7.700h16.600v10.600H.7zM17.500 4h1.500v4h-1.500" fill="none" stroke="#111" stroke-width="1.300"/><path d="M2.500 2.500h9.500v7H2.500z"/></svg>
    <svg width="21" height="18" viewBox="0 0 21 18" style="margin-left:9px"><path d="M.7 6h2.500L7 2.500v13L3.200 12H.7z" fill="none" stroke="#111" stroke-width="1.300"/><path d="M10 6.500q1.500 2.500 0 5M13 4q3.500 5 0 10" fill="none" stroke="#111" stroke-width="1.200"/><path d="M16 1.500q6 7.500 0 15" fill="none" stroke="#999" stroke-width="1.200"/></svg>
    <svg width="16" height="17" viewBox="0 0 16 17" style="margin-left:12px"><path d="M.7 16C.7 8 7 1 15.500 1M4.500 16C4.500 10 9 5 15.500 5M8.300 16c0-4 3-7 7.200-7" fill="none" stroke="#222" stroke-width="1.200"/><path d="M11.500 16c0-2 1.500-3.500 4-3.500" fill="none" stroke="#222" stroke-width="1.200"/><circle cx="14" cy="15" r="1.500"/></svg>
    <div class="lang-box text-center">ENG<br>IN</div>
    <div class="clock-box text-center">2:01 AM<br>10/25/2024</div>
    <svg width="21" height="20" viewBox="0 0 21 20" style="margin-left:11px"><path d="M.7.700h19v15h-6.500L10.500 18.800 7.500 15.700H.7z" fill="none" stroke="#111" stroke-width="1.300"/></svg>
    <span class="desktop-edge"></span>
  </div>
</footer>

</body>
</html>
